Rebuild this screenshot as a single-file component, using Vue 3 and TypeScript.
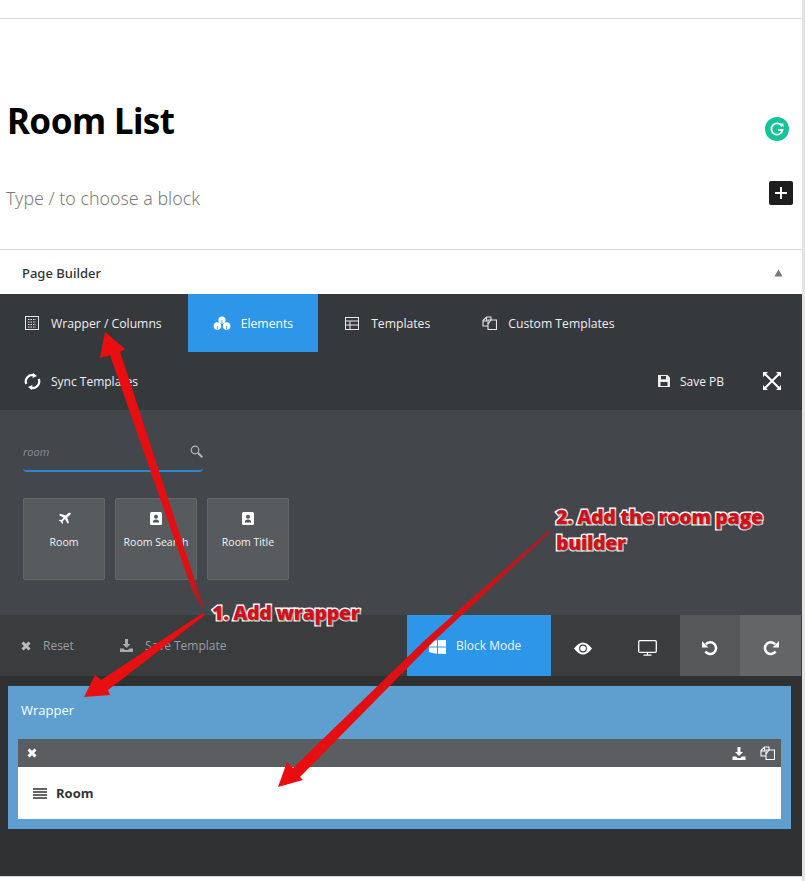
<script setup lang="ts">
const tabs = [
  { label: 'Wrapper / Columns', icon: 'grid', active: false },
  { label: 'Elements', icon: 'cubes', active: true },
  { label: 'Templates', icon: 'table', active: false },
  { label: 'Custom Templates', icon: 'copy', active: false },
]
const cards = [
  { label: 'Room', icon: 'plane' },
  { label: 'Room Search', icon: 'contact' },
  { label: 'Room Title', icon: 'contact' },
]
</script>

<template>
  <div class="page">
    <main class="main">
      <div class="topbar"></div>
      <section class="editor">
        <h1 class="title">Room List</h1>
        <div class="block-row">
          <span class="placeholder">Type / to choose a block</span>
          <button class="plus">
            <svg width="14" height="14" viewBox="0 0 14 14"><path d="M7 1v12M1 7h12" stroke="#fff" stroke-width="2" /></svg>
          </button>
        </div>
      </section>
      <header class="pb-head">
        <span>Page Builder</span>
        <svg width="9" height="8" viewBox="0 0 9 8"><path d="M4.5 0.5L8.6 7.5H.4z" fill="#777" /></svg>
      </header>

      <nav class="tabs">
        <div v-for="t in tabs" :key="t.label" class="tab" :class="{ active: t.active }">
          <svg v-if="t.icon === 'grid'" width="14" height="14" viewBox="0 0 14 14" fill="none" stroke="#e8e8e8"><rect x=".5" y=".5" width="13" height="13" /><path d="M3 3.5h8M3 6h8M3 8.5h8M3 11h8" stroke-dasharray="1.5 1" /></svg>
          <svg v-else-if="t.icon === 'cubes'" width="18" height="14" viewBox="0 0 18 14" fill="#fff"><circle cx="9" cy="4" r="3.6" /><circle cx="4.4" cy="10" r="3.8" /><circle cx="13.6" cy="10" r="3.8" /><path d="M9 4v3M4.4 10v3M13.6 10v3" stroke="#2d96e8" stroke-width=".8" /></svg>
          <svg v-else-if="t.icon === 'table'" width="14" height="13" viewBox="0 0 14 13" fill="none" stroke="#e8e8e8"><rect x=".5" y=".5" width="13" height="12" /><path d="M.5 4h13M.5 8h13M5 4v8.500" /></svg>
          <svg v-else width="15" height="14" viewBox="0 0 15 14" fill="none" stroke="#e8e8e8" stroke-width="1.100"><path d="M6 4h8.500v9.500H6z" /><path d="M6 10H1V4.500L4.500 1H9v3" /><path d="M1 5h3.500V1.500M6 8l3-4" /></svg>
          <span>{{ t.label }}</span>
        </div>
      </nav>

      <div class="sync-row">
        <div class="sync">
          <svg width="17" height="17" viewBox="0 0 17 17" fill="none" stroke="#fff" stroke-width="2.200"><path d="M2.300 11A6.500 6.500 0 0 1 10 2.200" /><path d="M14.700 6A6.500 6.500 0 0 1 7 14.800" /><path d="M9 0l4 3-4.500 2zM8 17l-4-3 4.500-2z" fill="#fff" stroke="none" /></svg>
          <span>Sync Templates</span>
        </div>
        <div class="save">
          <svg width="12" height="12" viewBox="0 0 12 12"><path fill="#eee" d="M0 0h9.500L12 2.500V12H0z" /><path fill="#36393c" d="M3 1h5v3.300H3zM2.500 7h7v4h-7z" /></svg>
          <span>Save PB</span>
          <svg class="expand" width="18" height="18" viewBox="0 0 18 18" fill="none" stroke="#fff" stroke-width="2"><path d="M2 2l14 14M16 2L2 16" /><path d="M0 5V0h5zM13 0h5v5zM0 13v5h5zM18 13v5h-5z" fill="#fff" stroke="none" /></svg>
        </div>
      </div>

      <section class="elements">
        <div class="search">
          <span class="search-text">room</span>
          <svg width="13" height="13" viewBox="0 0 13 13" fill="none" stroke="#b5b8ba"><circle cx="5" cy="5" r="3.800" stroke-width="1.200" /><path d="M8 8l4.300 4.300" stroke-width="2" /></svg>
        </div>
        <div class="cards">
          <div v-for="c in cards" :key="c.label" class="card">
            <svg v-if="c.icon === 'plane'" width="13" height="12" viewBox="0 0 13 12" fill="#fff"><path d="M12.600.5c-.8-.6-2-.2-2.800.600L7.900 3 2.200 1.300 1 2.400l4.600 2.800-2.200 2.300-1.700-.300-.9.800 2.200 1.200 1.200 2.200.8-.9-.3-1.700 2.300-2.200 2.800 4.600 1.100-1.200L9.200 5.100l1.900-1.900c.8-.8 2.100-2 1.500-2.700z" /></svg>
            <svg v-else width="12" height="13" viewBox="0 0 12 13"><rect width="12" height="13" rx="1.500" fill="#fff" /><circle cx="6" cy="4.800" r="2" fill="#55585b" /><path d="M2.800 10.500c0-2.200 1.300-3 3.200-3s3.200.8 3.200 3z" fill="#55585b" /></svg>
            <span>{{ c.label }}</span>
          </div>
        </div>
      </section>

      <div class="toolbar">
        <div class="tool-left">
          <span class="tool">
            <svg width="10" height="10" viewBox="0 0 10 10"><path d="M1.500 1.500l7 7M8.500 1.500l-7 7" stroke="#bbb" stroke-width="3" /></svg>
            <span>Reset</span>
          </span>
          <span class="tool">
            <svg width="13" height="13" viewBox="0 0 13 13" fill="#aaa"><path d="M5 0h3v5h2.500L6.500 9 2.500 5H5zM0 9.500h3.500L5 11h3l1.500-1.500H13V13H0z" /></svg>
            <span>Save Template</span>
          </span>
        </div>
        <div class="mode">
          <svg class="mode-icon" width="17" height="14" viewBox="0 0 17 14" fill="#fff"><path d="M0 2.200Q3 .8 8 .3V6.500H0zM9 .2Q13 0 17 0V6.500H9zM0 7.500h8v6.200Q3 13 0 12zM9 7.500h8V14q-4-.2-8-.3z" /></svg>
          <span>Block Mode</span>
        </div>
        <div class="view-btn">
          <svg width="18" height="13" viewBox="0 0 18 13"><path d="M0 6.500Q4.500 .5 9 .5t9 6q-4.500 6-9 6t-9-6z" fill="#fff" /><circle cx="9" cy="6.500" r="3.900" fill="#3a3c3e" /><circle cx="9" cy="6.500" r="2.800" fill="#fff" /></svg>
        </div>
        <div class="view-btn">
          <svg width="19" height="16" viewBox="0 0 19 16" fill="none" stroke="#fff" stroke-width="1.300"><rect x=".7" y=".7" width="17.600" height="11.600" rx="1" /><path d="M9.500 12.300v2.500M5.500 15.200h8" /></svg>
        </div>
        <div class="hist undo">
          <svg width="16" height="16" viewBox="0 0 15 15" fill="none"><path d="M3.200 10.800A5.500 5.500 0 1 0 3.600 4" stroke="#fff" stroke-width="2.400" /><path d="M0 1v6h6z" fill="#fff" /></svg>
        </div>
        <div class="hist redo">
          <svg width="16" height="16" viewBox="0 0 15 15" fill="none"><path d="M11.800 10.800A5.500 5.500 0 1 1 11.400 4" stroke="#fff" stroke-width="2.400" /><path d="M15 1v6H9z" fill="#fff" /></svg>
        </div>
      </div>

      <section class="canvas">
        <div class="wrapper">
          <div class="wrapper-label">Wrapper</div>
          <div class="bar">
            <svg width="10" height="10" viewBox="0 0 10 10"><path d="M1.500 1.500l7 7M8.500 1.500l-7 7" stroke="#fff" stroke-width="3" /></svg>
            <div class="bar-icons">
              <svg width="14" height="13" viewBox="0 0 13 13" fill="#fff"><path d="M5 0h3v5h2.500L6.500 9 2.500 5H5zM0 9.500h3.500L5 11h3l1.500-1.500H13V13H0z" /></svg>
              <svg width="15" height="14" viewBox="0 0 15 14" fill="none" stroke="#fff" stroke-width="1.100"><path d="M6 4h8.500v9.500H6z" /><path d="M6 10H1V4.500L4.500 1H9v3" /><path d="M1 5h3.500V1.500M6 8l3-4" /></svg>
            </div>
          </div>
          <div class="row">
            <svg width="14" height="11" viewBox="0 0 14 11" fill="none" stroke="#333" stroke-width="1.300"><path d="M0 1h14M0 4h14M0 7h14M0 10h14" /></svg>
            <span>Room</span>
          </div>
        </div>
      </section>
      <div class="foot"></div>
    </main>
    <div class="scrollbar"></div>

    <svg class="grammarly" width="24" height="24" viewBox="0 0 24 24"><circle cx="12" cy="12" r="12" fill="#15c39a" /><path d="M17 9.500A5.600 5.600 0 1 0 17.500 13H13" fill="none" stroke="#fff" stroke-width="1.800" /><path d="M15 6.500h3.500V10z" fill="#fff" /></svg>

    <svg class="arrows" width="805" height="881" viewBox="0 0 805 881">
      <defs>
        <linearGradient id="a1" gradientUnits="userSpaceOnUse" x1="105" y1="332" x2="204" y2="607">
          <stop offset="0" stop-color="#ec0d10" /><stop offset=".85" stop-color="#e20f13" /><stop offset="1" stop-color="#9c2228" />
        </linearGradient>
        <linearGradient id="a3" gradientUnits="userSpaceOnUse" x1="278" y1="787" x2="550" y2="531">
          <stop offset="0" stop-color="#ec0d10" /><stop offset=".7" stop-color="#d81014" /><stop offset="1" stop-color="#9a2329" />
        </linearGradient>
      </defs>
      <path fill="url(#a1)" d="M105 332L125 349 120 352 198 590 204 606 202 607 192 590 110 355 100 358z" />
      <path fill="#e80f12" d="M84 697L95 675 101 680 203 613 205 615 108 690 110 695z" />
      <path fill="url(#a3)" d="M278 787L287 762 293 768 425 640 549 530 551 532 435 640 300 777 303 780z" />
    </svg>
    <div class="note note-1">1. Add wrapper</div>
    <div class="note note-2">2. Add the room page<br />builder</div>
  </div>
</template>

<style>
html, body { margin: 0; background: #fff; }
</style>

<style scoped>
.page { position: relative; display: flex; width: 805px; height: 881px; overflow: hidden; font-family: "Open Sans", "Noto Sans", sans-serif; }
.main { width: 802px; display: flex; flex-direction: column; }
.scrollbar { width: 3px; background: #e3e3e3; }
.topbar { height: 18px; border-bottom: 1px solid #dcdcdc; }
.editor { height: 231px; box-sizing: border-box; padding: 79px 0 0 7px; border-bottom: 1px solid #d8d8d8; }
.title { margin: 0; font: 700 35px/46px "Noto Sans", sans-serif; color: #000; letter-spacing: -.6px; }
.block-row { display: flex; justify-content: space-between; align-items: flex-start; margin: 37px 9px 0 -1px; }
.placeholder { font: 300 17.800px/26px "Noto Sans", sans-serif; color: #7d7d7d; padding-top: 4px; }
.plus { width: 24px; height: 24px; padding: 0; border: 0; border-radius: 2px; background: #1e1e1e; display: flex; align-items: center; justify-content: center; }
.pb-head { height: 44px; display: flex; align-items: center; justify-content: space-between; padding: 2px 19px 0 22px; box-sizing: border-box; font: 500 13px "Noto Sans", sans-serif; color: #333; }
.tabs { height: 58px; display: flex; background: #36393c; }
.tab { display: flex; align-items: center; gap: 12px; padding: 0 25px; color: #eee; font-size: 12.200px; }
.tab:first-child { padding-right: 26px; }
.tab:nth-child(3) { padding: 0 25px 0 27px; }
.tab:nth-child(4) { padding-left: 27px; gap: 11px; }
.tab.active { background: #2d96e8; color: #fff; gap: 10px; }
.sync-row { height: 58px; background: #36393c; display: flex; align-items: center; justify-content: space-between; padding: 0 21px 0 24px; color: #f0f0f0; font-size: 12px; }
.sync, .save { display: flex; align-items: center; gap: 10px; }
.expand { margin-left: 29px; }
.elements { height: 205px; box-sizing: border-box; padding: 28px 0 0 23px; background: #43474b; }
.search { width: 180px; height: 34px; box-sizing: border-box; display: flex; align-items: center; justify-content: space-between; padding-bottom: 6px; border-bottom: 2px solid #2d86d3; border-radius: 0 0 4px 4px; }
.search-text { font-size: 11px; font-style: italic; color: #8b8e91; }
.cards { display: flex; gap: 10px; margin-top: 26px; }
.card { width: 82px; height: 82px; box-sizing: border-box; padding-top: 13px; display: flex; flex-direction: column; align-items: center; gap: 10px; background: #585b5e; border: 1px solid #65686b; border-radius: 2px; color: #f2f2f2; font-size: 10.500px; }
.card span { white-space: nowrap; }
.card svg { height: 13px; }
.toolbar { height: 61px; display: flex; align-items: stretch; background: #3a3c3e; }
.tool-left { width: 407px; display: flex; align-items: center; padding-left: 21px; box-sizing: border-box; gap: 46px; color: #9c9ea0; font-size: 12px; }
.tool { display: flex; align-items: center; gap: 12px; }
.mode { width: 144px; box-sizing: border-box; padding-left: 22px; display: flex; align-items: center; gap: 10px; background: #2d96e8; color: #eef7ff; font-size: 12px; }
.mode-icon { margin-top: 3px; }
.view-btn { width: 64.500px; display: flex; align-items: center; justify-content: center; padding-top: 5px; box-sizing: border-box; }
.hist { display: flex; align-items: center; justify-content: center; width: 60px; padding-top: 5px; box-sizing: border-box; }
.undo { background: #555758; }
.redo { background: #636567; width: 61px; }
.canvas { height: 200px; box-sizing: border-box; padding: 10px 11px 0 8px; background: #2f3133; }
.wrapper { height: 143px; box-sizing: border-box; padding: 0 10px; background: #5f9fd0; }
.wrapper-label { height: 53px; padding: 0 0 5px 3px; display: flex; align-items: center; box-sizing: border-box; color: #fff; font-size: 13px; }
.bar { height: 28px; display: flex; align-items: center; justify-content: space-between; padding: 0 6px 0 9px; background: #5a5e60; }
.bar-icons { display: flex; gap: 14px; align-items: center; }
.row { height: 52px; display: flex; align-items: center; gap: 9px; padding-left: 15px; background: #fff; color: #333; font-size: 13px; font-weight: 700; }
.foot { flex: 1; border-top: 1px solid #d8d8d8; background: #fff; }
.grammarly { position: absolute; left: 765px; top: 117px; }
.arrows { position: absolute; left: 0; top: 0; pointer-events: none; }
.note { position: absolute; font: 800 19.500px/26px "Open Sans", sans-serif; color: #d0101a; -webkit-text-stroke: 3px #fff; paint-order: stroke fill; text-shadow: 1px 1px 2px rgba(0,0,0,.5); letter-spacing: -.3px; white-space: nowrap; }
.note-1 { left: 212px; top: 600px; }
.note-2 { left: 556px; top: 504px; }
</style>
